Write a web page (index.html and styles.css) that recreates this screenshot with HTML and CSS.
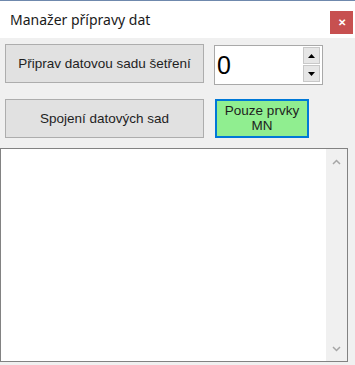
FILE: index.html
```html
<!DOCTYPE html>
<html lang="cs">
<head>
<meta charset="utf-8">
<link rel="stylesheet" href="styles.css">
</head>
<body>
<div class="window">
  <div class="titlebar">
    <span class="title">Manažer přípravy dat</span>
    <span class="close">&#x2715;</span>
  </div>
  <div class="content">
    <div class="row row1">
      <div class="btn btn-wide">Připrav datovou sadu šetření</div>
      <div class="numeric">
        <span class="num-value">0</span>
        <div class="spinner">
          <div class="spin"><svg width="7" height="4" viewBox="0 0 7 4"><path d="M0 4 L3.5 0 L7 4 Z" fill="#000"/></svg></div>
          <div class="spin"><svg width="7" height="4" viewBox="0 0 7 4"><path d="M0 0 L3.5 4 L7 0 Z" fill="#000"/></svg></div>
        </div>
      </div>
    </div>
    <div class="row row2">
      <div class="btn btn-wide">Spojení datových sad</div>
      <div class="btn btn-green">Pouze prvky<br>MN</div>
    </div>
    <div class="textbox">
      <div class="text-area"></div>
      <div class="scrollbar">
        <svg width="9" height="6" viewBox="0 0 9 6"><path d="M1 5 L4.5 1.5 L8 5" fill="none" stroke="#a6a6a6" stroke-width="1.5"/></svg>
        <svg width="9" height="6" viewBox="0 0 9 6"><path d="M1 1 L4.5 4.5 L8 1" fill="none" stroke="#a6a6a6" stroke-width="1.5"/></svg>
      </div>
    </div>
  </div>
</div>
</body>
</html>
```

FILE: styles.css
```css
html, body {
  margin: 0;
  padding: 0;
}
body {
  background: #f0f0f0;
  font-family: "Liberation Sans", Arial, sans-serif;
  width: 355px;
  height: 365px;
  overflow: hidden;
}
.window {
  display: flex;
  flex-direction: column;
}
.titlebar {
  height: 37px;
  background: #ffffff;
  border-top: 1px solid #6f89ad;
  display: flex;
  align-items: flex-start;
  justify-content: space-between;
}
.title {
  font-family: "Noto Sans", "Liberation Sans", sans-serif;
  font-size: 14px;
  color: #1a1a1a;
  margin-left: 10px;
  margin-top: 9px;
}
.close {
  width: 23px;
  height: 23px;
  margin-top: 10px;
  margin-right: 2px;
  background: #c75050;
  color: #ffffff;
  font-size: 10px;
  font-weight: bold;
  display: flex;
  align-items: center;
  justify-content: center;
}
.content {
  display: flex;
  flex-direction: column;
}
.row {
  display: flex;
  align-items: flex-start;
  padding-left: 5px;
}
.row1 {
  margin-top: 6px;
  gap: 10px;
}
.row2 {
  margin-top: 14px;
  gap: 11px;
}
.btn {
  box-sizing: border-box;
  border: 1px solid #adadad;
  background: #e1e1e1;
  color: #1e1e1e;
  font-size: 13.5px;
  display: flex;
  align-items: center;
  justify-content: center;
  text-align: center;
}
.btn-wide {
  width: 199px;
  height: 39px;
}
.btn-green {
  width: 94px;
  height: 39px;
  background: #90ee90;
  border: 2px solid #0078d7;
  font-size: 13.5px;
  line-height: 15px;
  padding-bottom: 2px;
}
.numeric {
  box-sizing: border-box;
  width: 109px;
  height: 40px;
  margin-top: 1px;
  background: #ffffff;
  border: 1px solid #a9a9a9;
  display: flex;
  justify-content: space-between;
  align-items: flex-start;
}
.num-value {
  font-size: 25px;
  color: #000;
  margin-left: 2px;
  margin-top: 4px;
  line-height: 30px;
}
.spinner {
  display: flex;
  flex-direction: column;
  gap: 1px;
  margin-top: 1px;
  margin-right: 2px;
}
.spin {
  box-sizing: border-box;
  width: 17px;
  height: 17px;
  background: #e6e6e6;
  border: 1px solid #c8c8c8;
  display: flex;
  align-items: center;
  justify-content: center;
}
.textbox {
  box-sizing: border-box;
  margin-top: 10px;
  width: 348px;
  height: 214px;
  background: #ffffff;
  border: 1px solid #828282;
  display: flex;
}
.text-area {
  flex: 1;
}
.scrollbar {
  width: 21px;
  background: #f0f0f0;
  display: flex;
  flex-direction: column;
  align-items: center;
  justify-content: space-between;
  padding: 10px 0 9px;
}
```
